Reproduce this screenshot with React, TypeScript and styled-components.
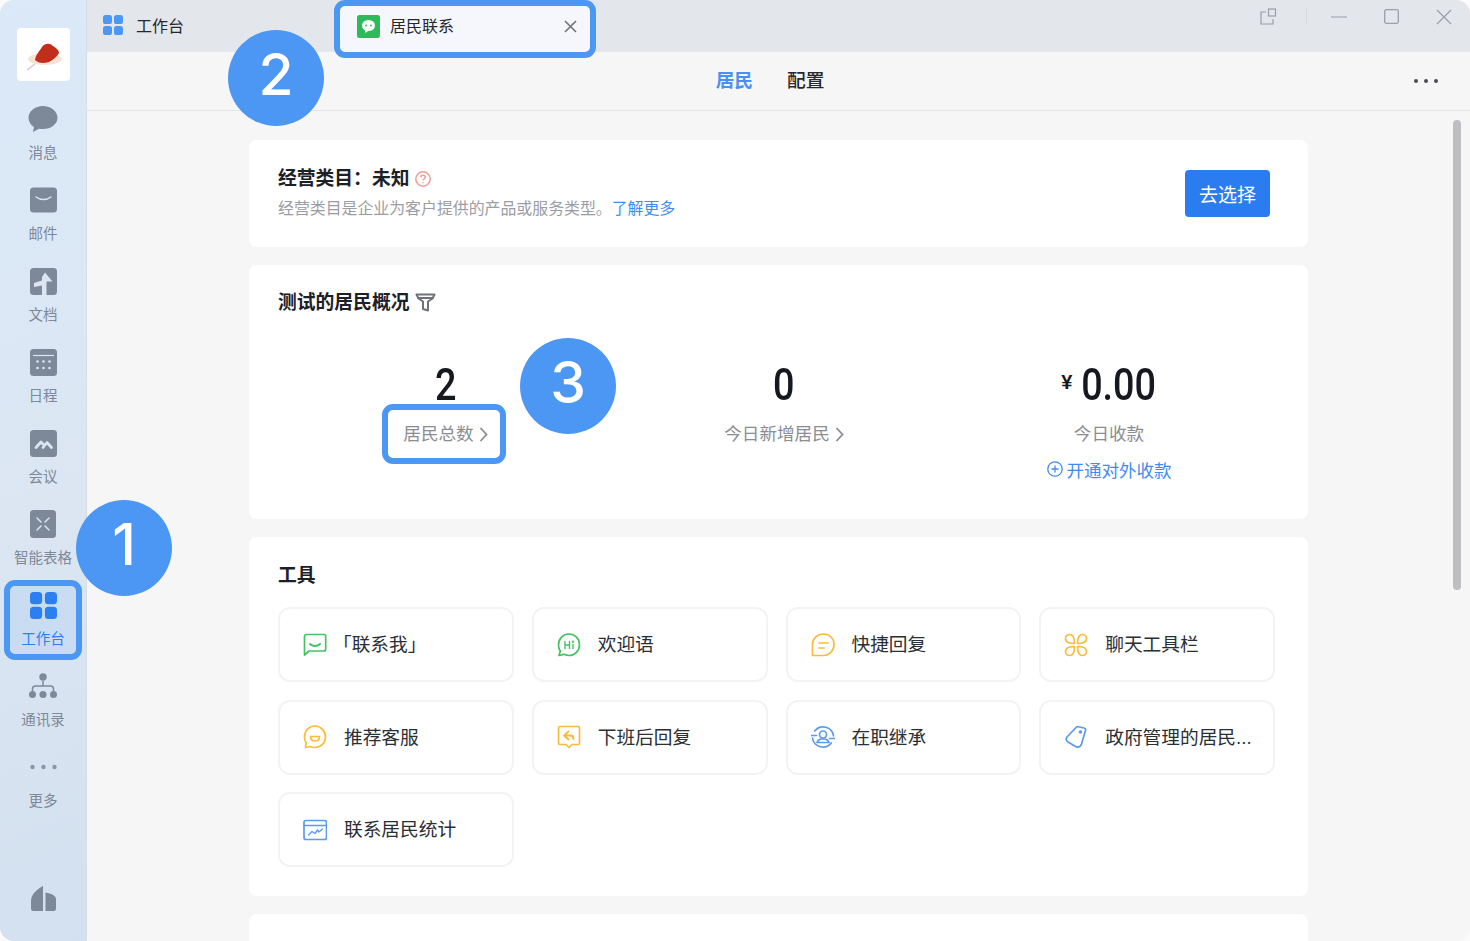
import React from 'react';
import styled, { createGlobalStyle } from 'styled-components';

const cjk = `"Liberation Sans", "Noto Sans CJK SC", sans-serif`;

const GlobalStyle = createGlobalStyle`
  html, body {
    margin: 0;
    padding: 0;
    background: #fbfbfb;
  }
  * {
    box-sizing: border-box;
  }
`;

const Window = styled.div`
  width: 1470px;
  height: 941px;
  display: flex;
  overflow: hidden;
  position: relative;
  border-radius: 14px;
  font-family: ${cjk};
  background: #f6f6f6;
`;

const SideBar = styled.div`
  width: 87px;
  flex-shrink: 0;
  display: flex;
  flex-direction: column;
  align-items: center;
  padding-top: 28px;
  background: linear-gradient(160deg, #dbe9f8 0%, #dbe6f2 55%, #d3e0ef 100%);
  border-right: 1px solid #d5dde6;
`;

const Logo = styled.div`
  width: 53px;
  height: 53px;
  border-radius: 4px;
  background: #fff;
  display: flex;
  align-items: center;
  justify-content: center;
  margin-bottom: 19px;
`;

const NavItem = styled.div<{ $active?: boolean }>`
  position: relative;
  width: 66px;
  height: 68px;
  margin-bottom: 13px;
  display: flex;
  flex-direction: column;
  align-items: center;
  justify-content: flex-start;
  padding-top: 4px;
  border-radius: 5px;
  background: ${(p) => (p.$active ? '#c9dcf2' : 'transparent')};
  color: ${(p) => (p.$active ? '#2b7ff0' : '#7d8899')};
`;

const NavIcon = styled.div`
  height: 30px;
  display: flex;
  align-items: center;
  justify-content: center;
`;

const NavLabel = styled.div`
  font-size: 14.5px;
  line-height: 18px;
  margin-top: 10px;
  white-space: nowrap;
`;

const SideFooter = styled.div`
  margin-top: auto;
  margin-bottom: 30px;
  display: flex;
`;

const Main = styled.div`
  flex: 1;
  min-width: 0;
  display: flex;
  flex-direction: column;
  position: relative;
`;

const TabBar = styled.div`
  height: 52px;
  flex-shrink: 0;
  display: flex;
  align-items: flex-start;
  position: relative;
  z-index: 2;
  background: #e3e6ea;
`;

const HomeTab = styled.div`
  width: 253px;
  height: 50px;
  padding-left: 16px;
  display: flex;
  align-items: center;
  gap: 13px;
  font-size: 16px;
  color: #23272e;
`;

const ActiveTab = styled.div`
  position: relative;
  width: 250px;
  height: 46px;
  margin-top: 6px;
  padding: 0 13px 6px 17px;
  display: flex;
  align-items: center;
  gap: 10px;
  background: #f5f7fc;
  border-radius: 4px;
  font-size: 16px;
  color: #23272e;
`;

const TabTitle = styled.span`
  margin-bottom: 2px;
`;

const CloseWrap = styled.span`
  margin-left: auto;
  display: flex;
`;

const WindowControls = styled.div`
  margin-left: auto;
  height: 33px;
  display: flex;
  align-items: center;
  gap: 37px;
  padding-right: 18px;
  color: #9a9ea5;
`;

const ControlGroup = styled.div`
  display: flex;
  align-items: center;
  margin-right: -13px;
`;

const ControlDivider = styled.span`
  width: 1px;
  height: 17px;
  background: #d8dadd;
  margin-left: 29px;
`;

const SubNav = styled.div`
  height: 59px;
  flex-shrink: 0;
  display: flex;
  align-items: center;
  justify-content: center;
  gap: 34px;
  position: relative;
  padding: 0 17px 5px 0;
  border-bottom: 1px solid #e4e5e7;
  background: #f6f6f6;
`;

const SubNavItem = styled.div<{ $active?: boolean }>`
  font-size: 18.7px;
  font-weight: ${(p) => (p.$active ? 700 : 500)};
  color: ${(p) => (p.$active ? '#4a90f0' : '#262a30')};
`;

const MoreDots = styled.div`
  position: absolute;
  right: 32px;
  top: 27px;
  display: flex;
  gap: 6px;
`;

const Dot = styled.span`
  width: 4px;
  height: 4px;
  border-radius: 50%;
  background: #4a4e55;
`;

const Content = styled.div`
  flex: 1;
  min-height: 0;
  overflow: hidden;
  padding: 29px 162px 0;
  display: flex;
  flex-direction: column;
  gap: 18px;
`;

const ScrollThumb = styled.div`
  position: absolute;
  right: 9px;
  top: 120px;
  width: 8px;
  height: 470px;
  border-radius: 4px;
  background: #bcbec2;
`;

const Card = styled.div`
  flex-shrink: 0;
  background: #fff;
  border-radius: 8px;
`;

const CategoryCard = styled(Card)`
  height: 107px;
  padding: 0 38px 0 29px;
  display: flex;
  align-items: center;
  justify-content: space-between;
`;

const CategoryText = styled.div`
  display: flex;
  flex-direction: column;
  gap: 7px;
`;

const TitleRow = styled.div`
  display: flex;
  align-items: center;
  gap: 6px;
  height: 23px;
`;

const Title = styled.div`
  font-size: 18.8px;
  line-height: 23px;
  font-weight: 700;
  color: #1c2027;
  white-space: nowrap;
`;

const SubText = styled.div`
  font-size: 15.9px;
  line-height: 23px;
  color: #9a9da3;
  white-space: nowrap;
`;

const TextLink = styled.span`
  color: #3f8bf2;
`;

const PrimaryButton = styled.div`
  width: 85px;
  height: 47px;
  border-radius: 4px;
  background: #2b7cf0;
  color: #fff;
  font-size: 19px;
  display: flex;
  align-items: center;
  justify-content: center;
`;

const StatsCard = styled(Card)`
  height: 254px;
  padding: 26px 29px 0;
`;

const StatsGrid = styled.div`
  display: grid;
  grid-template-columns: 335px 342px 308px;
  margin-top: 48px;
`;

const Stat = styled.div`
  display: flex;
  flex-direction: column;
  align-items: center;
`;

const StatValue = styled.div`
  height: 46px;
  display: flex;
  align-items: center;
  font-family: "Roboto", sans-serif;
  font-weight: 500;
  font-size: 45px;
  line-height: 46px;
  color: #15191f;
`;

const Digits = styled.span`
  display: inline-block;
  transform: scaleX(0.84);
`;

const Amount = styled(Digits)`
  margin: 0 -7px;
`;

const Yen = styled.span`
  font-family: ${cjk};
  font-size: 20px;
  font-weight: 700;
  margin-right: 9px;
  margin-top: -6px;
`;

const StatLabel = styled.div`
  position: relative;
  margin-top: 14px;
  display: flex;
  align-items: center;
  gap: 5px;
  height: 24px;
  font-size: 17.6px;
  line-height: 24px;
  color: #8a8d93;
  white-space: nowrap;
`;

const OpenLink = styled.div`
  margin-top: 11px;
  display: flex;
  align-items: center;
  gap: 4px;
  height: 24px;
  font-size: 17.5px;
  color: #3f8bf2;
  white-space: nowrap;
`;

const ToolsCard = styled(Card)`
  height: 359px;
  padding: 27px 0 0 29px;
`;

const BottomCard = styled(Card)`
  height: 60px;
`;

const ToolGrid = styled.div`
  width: 997px;
  margin-top: 20px;
  display: grid;
  grid-template-columns: repeat(4, 1fr);
  grid-auto-rows: 75px;
  gap: 17.5px 18px;
`;

const Tool = styled.div`
  border: 2px solid #f2f3f5;
  border-radius: 12px;
  padding-left: 23px;
  display: flex;
  align-items: center;
  gap: 17px;
  font-size: 18.7px;
  color: #2a2e35;
  white-space: nowrap;
  overflow: hidden;
`;

const ToolName = styled.span<{ $tuck?: boolean }>`
  margin-bottom: 4px;
  margin-left: ${(p) => (p.$tuck ? -11 : 0)}px;
`;

const Ring = styled.span<{ $x: number; $y: number; $right?: number }>`
  position: absolute;
  left: -${(p) => p.$x}px;
  right: -${(p) => p.$right ?? p.$x}px;
  top: -${(p) => p.$y}px;
  bottom: -${(p) => p.$y}px;
  border: 6px solid #4c97f4;
  border-radius: 11px;
  pointer-events: none;
`;

const Callout = styled.div<{ $cx: number; $cy: number }>`
  position: absolute;
  z-index: 3;
  left: ${(p) => p.$cx - 48}px;
  top: ${(p) => p.$cy - 48}px;
  width: 96px;
  height: 96px;
  border-radius: 50%;
  background: #4c97f4;
  color: #fff;
  font-family: "Inter", "Liberation Sans", sans-serif;
  font-size: 57px;
  font-weight: 500;
  line-height: 90px;
  text-align: center;
`;

const GridFour = ({ size, color }: { size: number; color: string }) => (
  <svg width={size} height={size} viewBox="0 0 20 20" fill={color}>
    <rect x="0" y="0" width="9" height="9" rx="2.6" />
    <rect x="11" y="0" width="9" height="9" rx="2.6" />
    <rect x="0" y="11" width="9" height="9" rx="2.6" />
    <rect x="11" y="11" width="9" height="9" rx="2.6" />
  </svg>
);

const navItems: { key: string; icon: React.ReactNode; active?: boolean }[] = [
  {
    key: '消息',
    icon: (
      <svg width="30" height="28" viewBox="0 0 30 28" fill="currentColor">
        <path d="M15 1C7 1 .5 6.2.5 12.8c0 3.8 2.2 7.1 5.4 9.3L5 27l6-3.3c1.3.3 2.6.4 4 .4 8 0 14.5-5 14.5-11.3S23 1 15 1z" />
      </svg>
    ),
  },
  {
    key: '邮件',
    icon: (
      <svg width="27" height="26" viewBox="0 0 27 26">
        <rect width="27" height="25" y=".5" rx="3.5" fill="currentColor" />
        <path d="M6 10c4.500 3.400 10.500 3.400 15 0" fill="none" stroke="#d8e3ef" strokeWidth="1.5" strokeLinecap="round" />
      </svg>
    ),
  },
  {
    key: '文档',
    icon: (
      <svg width="27" height="27" viewBox="0 0 27 27">
        <rect width="27" height="27" rx="3.5" fill="currentColor" />
        <path d="M15 4.500 22.500 13.500H16.500V27H12V17.500L4 19v-4l8-2.500V9z" fill="#dbe6f2" />
      </svg>
    ),
  },
  {
    key: '日程',
    icon: (
      <svg width="27" height="27" viewBox="0 0 27 27">
        <rect width="27" height="27" rx="3.5" fill="currentColor" />
        <path d="M3 6.500h21" stroke="#dbe6f2" strokeWidth="1.2" />
        {[7.5, 13.5, 19.5].map((x) =>
          [12.5, 19].map((y) => <circle key={`${x}-${y}`} cx={x} cy={y} r="1.3" fill="#dbe6f2" />),
        )}
      </svg>
    ),
  },
  {
    key: '会议',
    icon: (
      <svg width="27" height="27" viewBox="0 0 27 27">
        <rect width="27" height="27" rx="3.5" fill="currentColor" />
        <path d="M6 17.500 11 12l2.500 2.500M13 17.500 17 12.500l4.500 5" fill="none" stroke="#dbe6f2" strokeWidth="2.8" strokeLinecap="round" strokeLinejoin="round" />
      </svg>
    ),
  },
  {
    key: '智能表格',
    icon: (
      <svg width="26" height="28" viewBox="0 0 26 28">
        <rect width="26" height="28" rx="3.5" fill="currentColor" />
        <path d="M7 8l4 4M19 8l-4 4M7 20l4-4M19 20l-4-4" stroke="#dbe6f2" strokeWidth="1.5" strokeLinecap="round" />
      </svg>
    ),
  },
  { key: '工作台', icon: <GridFour size={27} color="#2b7ff0" />, active: true },
  {
    key: '通讯录',
    icon: (
      <svg width="28" height="26" viewBox="0 0 28 26" fill="currentColor">
        <circle cx="14" cy="4" r="3.7" />
        <circle cx="3.5" cy="21.5" r="3.5" />
        <circle cx="14" cy="21.5" r="3.5" />
        <circle cx="24.5" cy="21.5" r="3.5" />
        <path d="M14 8v5M3.500 18v-2c0-1.600 1.200-3 3-3h15c1.800 0 3 1.400 3 3v2" fill="none" stroke="currentColor" strokeWidth="1.5" />
      </svg>
    ),
  },
  {
    key: '更多',
    icon: (
      <svg width="27" height="6" viewBox="0 0 27 6" fill="currentColor" opacity=".85">
        <circle cx="2.5" cy="3" r="2.2" />
        <circle cx="13.5" cy="3" r="2.2" />
        <circle cx="24.5" cy="3" r="2.2" />
      </svg>
    ),
  },
];

type ToolIconProps = { color: string; children: React.ReactNode };

const ToolIcon: React.FC<ToolIconProps> = ({ color, children }) => (
  <svg width="24" height="24" viewBox="0 0 24 24" fill="none" stroke={color} strokeWidth="1.7" strokeLinecap="round" strokeLinejoin="round" style={{ flexShrink: 0 }}>
    {children}
  </svg>
);

const green = '#43c463';
const amber = '#f8bd3c';
const blue = '#5a9af2';

const tools: { key: string; tuck?: boolean; icon: React.ReactNode }[] = [
  {
    key: '「联系我」',
    tuck: true,
    icon: (
      <ToolIcon color={green}>
        <path d="M1.500 3.500a2 2 0 0 1 2-2h18a1.500 1.500 0 0 1 1.200 1.500v13a2 2 0 0 1-2 2H6l-4.500 4z" />
        <path d="M7 11c2.800 2.600 7.200 2.600 10 0" strokeWidth="2" />
      </ToolIcon>
    ),
  },
  {
    key: '欢迎语',
    icon: (
      <ToolIcon color={green}>
        <path d="M12 1C6 1 1.500 5.800 1.500 12c0 2.500.7 4.500 1.800 6L2 22.500l5-1.200c1.500.8 3.200 1.200 5 1.200 6 0 10.500-4.700 10.500-10.700S18 1 12 1z" />
        <path d="M8 8.500v7M12.500 8.500v7M8 12h4.500M16 11.500v4" strokeWidth="1.4" />
        <circle cx="16" cy="8.700" r=".4" />
      </ToolIcon>
    ),
  },
  {
    key: '快捷回复',
    icon: (
      <ToolIcon color={amber}>
        <path d="M12.500 1C6.500 1 1.500 5.500 1.500 11v11.500H12.500c6 0 10.500-5 10.500-11S18.500 1 12.500 1z" />
        <path d="M8 10h9M8 15h5" />
      </ToolIcon>
    ),
  },
  {
    key: '聊天工具栏',
    icon: (
      <ToolIcon color={amber}>
        <path d="M10.500 10.500C6 10.500 1.500 9.500 1.500 5.500a4 4 0 0 1 4-4c4 0 5 4.500 5 9z" />
        <path d="M13.500 10.500c4.500 0 9-1 9-5a4 4 0 0 0-4-4c-4 0-5 4.500-5 9z" />
        <path d="M10.500 13.500c-4.500 0-9 1-9 5a4 4 0 0 0 4 4c4 0 5-4.500 5-9z" />
        <path d="M13.500 13.500c4.500 0 9 1 9 5a4 4 0 0 1-4 4c-4 0-5-4.500-5-9z" />
      </ToolIcon>
    ),
  },
  {
    key: '推荐客服',
    icon: (
      <ToolIcon color={amber}>
        <path d="M12 1C6 1 1.500 5.800 1.500 12c0 2.300.6 4.300 1.600 5.900L2.500 22.500l4.800-1c1.400.7 3 1 4.700 1 6 0 10.500-4.700 10.500-10.500S18 1 12 1z" />
        <path d="M7.500 11.500h9c0 3-2 4.500-4.500 4.500s-4.500-1.500-4.500-4.500z" />
      </ToolIcon>
    ),
  },
  {
    key: '下班后回复',
    icon: (
      <ToolIcon color={amber}>
        <path d="M3 1.500h18a1.500 1.500 0 0 1 1.500 1.500v15a1.500 1.500 0 0 1-1.500 1.500h-6L12 22.500l-3-3H3A1.500 1.500 0 0 1 1.500 18V3A1.500 1.500 0 0 1 3 1.500z" />
        <path d="M11.500 6.500 7 10.500l4.500 4M7.500 10.500h6c2 0 3 1.200 3 3.500" strokeWidth="1.9" />
      </ToolIcon>
    ),
  },
  {
    key: '在职继承',
    icon: (
      <ToolIcon color={blue}>
        <path d="M22.500 11A10.500 10.500 0 0 0 3.800 6M1.500 13a10.500 10.500 0 0 0 18.700 5" />
        <path d="M.5 10.500h5M18.500 13.500h5" />
        <circle cx="12" cy="9.500" r="3.500" />
        <path d="M6 17.500c.8-2.200 2.500-3.200 4-3.500h4c1.500.3 3.200 1.300 4 3.500z" />
      </ToolIcon>
    ),
  },
  {
    key: '政府管理的居民...',
    icon: (
      <ToolIcon color={blue}>
        <path d="M13 1.500 20 3Q22 3.500 21.500 5.500L17.500 19Q16 23 12.500 22L4 17Q1 15 3 12z" />
        <circle cx="16.500" cy="7" r=".9" />
      </ToolIcon>
    ),
  },
  {
    key: '联系居民统计',
    icon: (
      <ToolIcon color={blue}>
        <rect x="1" y="2.500" width="22.500" height="19" rx="2" />
        <path d="M1 7.500h22.500" />
        <path d="M5.500 17 9 13.500l3 2 2.500-3.500 1.500 2 3.500-3" strokeWidth="1.3" />
      </ToolIcon>
    ),
  },
];

const Chevron = () => (
  <svg width="9" height="15" viewBox="0 0 9 15" fill="none" stroke="#8a8d93" strokeWidth="1.8">
    <path d="M1.500 1 7.500 7.500l-6 6.500" />
  </svg>
);

const App: React.FC = () => {
  return (
    <>
      <GlobalStyle />
      <Window>
        <SideBar>
          <Logo>
            <svg width="40" height="36" viewBox="0 0 40 36">
              <defs>
                <filter id="soft" x="-20%" y="-20%" width="140%" height="140%">
                  <feGaussianBlur stdDeviation="0.7" />
                </filter>
              </defs>
              <g filter="url(#soft)">
                <ellipse cx="22" cy="22" rx="17" ry="6" fill="#f6e3d6" />
                <path d="M12 23C13 17 16 15 19 10 22 6 27 6 30 9 33 11 36 13 36 16 34 20 30 23 26 25 20 27 15 26 12 23z" fill="#c22f1c" />
                <path d="M4 33l8-6" stroke="#e8cfdc" strokeWidth="1.8" />
              </g>
            </svg>
          </Logo>
          {navItems.map((item) => (
            <NavItem key={item.key} $active={item.active}>
              <NavIcon>{item.icon}</NavIcon>
              <NavLabel>{item.key}</NavLabel>
              {item.active && <Ring $x={6} $y={6} />}
            </NavItem>
          ))}
          <SideFooter>
            <svg width="25" height="25" viewBox="0 0 25 25" fill="#7d8899">
              <path d="M12 0C6 3.500 0 8 0 15v7.500A2.500 2.500 0 0 0 2.500 25H12z" />
              <path d="M14.500 6.500C20 7.500 25 9.500 25 13v9.500a2.500 2.500 0 0 1-2.500 2.500h-8z" />
            </svg>
          </SideFooter>
        </SideBar>
        <Main>
          <TabBar>
            <HomeTab>
              <GridFour size={20} color="#4c97f4" />
              工作台
            </HomeTab>
            <ActiveTab>
              <svg width="23" height="23" viewBox="0 0 23 23" style={{ flexShrink: 0 }}>
                <rect width="23" height="23" rx="2.5" fill="#2dbb5a" />
                <ellipse cx="11.500" cy="10.500" rx="6.500" ry="5.500" fill="#fff" />
                <path d="M8 14.500 8.300 18l3.500-2.500z" fill="#fff" />
                <circle cx="9" cy="10.500" r=".9" fill="#2dbb5a" />
                <circle cx="14" cy="10.500" r=".9" fill="#2dbb5a" />
              </svg>
              <TabTitle>居民联系</TabTitle>
              <CloseWrap>
                <svg width="13" height="13" viewBox="0 0 13 13" stroke="#6f7276" strokeWidth="1.6">
                  <path d="M1 1l11 11M12 1 1 12" />
                </svg>
              </CloseWrap>
              <Ring $x={6} $y={6} />
            </ActiveTab>
            <WindowControls>
              <ControlGroup>
                <svg width="17" height="17" viewBox="0 0 17 17" fill="none" stroke="currentColor" strokeWidth="1.2">
                  <path d="M6 4H1v12h12v-5" />
                  <rect x="8.500" y="1" width="7" height="7" />
                </svg>
                <ControlDivider />
              </ControlGroup>
              <svg width="16" height="2" viewBox="0 0 16 2" stroke="currentColor" strokeWidth="1.2">
                <path d="M0 1h16" />
              </svg>
              <svg width="15" height="15" viewBox="0 0 15 15" fill="none" stroke="currentColor" strokeWidth="1.3">
                <rect x=".7" y=".7" width="13.600" height="13.600" rx="1.500" />
              </svg>
              <svg width="16" height="16" viewBox="0 0 16 16" stroke="currentColor" strokeWidth="1.2">
                <path d="M1 1l14 14M15 1 1 15" />
              </svg>
            </WindowControls>
          </TabBar>
          <SubNav>
            <SubNavItem $active>居民</SubNavItem>
            <SubNavItem>配置</SubNavItem>
            <MoreDots>
              <Dot />
              <Dot />
              <Dot />
            </MoreDots>
          </SubNav>
          <Content>
            <CategoryCard>
              <CategoryText>
                <TitleRow>
                  <Title>经营类目：未知</Title>
                  <svg width="16" height="16" viewBox="0 0 16 16" fill="none" stroke="#f49c92" strokeWidth="1.5">
                    <circle cx="8" cy="8" r="7.2" />
                    <path d="M5.800 6.300c0-1.300 1-2.100 2.200-2.100s2.200.8 2.200 2c0 1.500-2.200 1.700-2.200 3.400" />
                    <path d="M8 11.200v1" />
                  </svg>
                </TitleRow>
                <SubText>
                  经营类目是企业为客户提供的产品或服务类型。<TextLink>了解更多</TextLink>
                </SubText>
              </CategoryText>
              <PrimaryButton>去选择</PrimaryButton>
            </CategoryCard>
            <StatsCard>
              <TitleRow>
                <Title>测试的居民概况</Title>
                <svg width="21" height="19" viewBox="0 0 20 19" fill="none" stroke="#6f7276" strokeWidth="2" strokeLinejoin="round">
                  <path d="M1 1.500h18l-2 4-4.500 3v9l-5-1.500V8.500L3 5.500z" />
                  <path d="M2 5h16" />
                </svg>
              </TitleRow>
              <StatsGrid>
                <Stat>
                  <StatValue>
                    <Digits>2</Digits>
                  </StatValue>
                  <StatLabel>
                    居民总数
                    <Chevron />
                    <Ring $x={21} $y={18} $right={18} />
                  </StatLabel>
                </Stat>
                <Stat>
                  <StatValue>
                    <Digits>0</Digits>
                  </StatValue>
                  <StatLabel>
                    今日新增居民
                    <Chevron />
                  </StatLabel>
                </Stat>
                <Stat>
                  <StatValue>
                    <Yen>¥</Yen>
                    <Amount>0.00</Amount>
                  </StatValue>
                  <StatLabel>今日收款</StatLabel>
                  <OpenLink>
                    <svg width="16" height="16" viewBox="0 0 16 16" fill="none" stroke="#3f8bf2" strokeWidth="1.3">
                      <circle cx="8" cy="8" r="7.2" />
                      <path d="M8 4.500v7M4.500 8h7" />
                    </svg>
                    开通对外收款
                  </OpenLink>
                </Stat>
              </StatsGrid>
            </StatsCard>
            <ToolsCard>
              <Title>工具</Title>
              <ToolGrid>
                {tools.map((tool) => (
                  <Tool key={tool.key}>
                    {tool.icon}
                    <ToolName $tuck={tool.tuck}>{tool.key}</ToolName>
                  </Tool>
                ))}
              </ToolGrid>
            </ToolsCard>
            <BottomCard />
          </Content>
          <ScrollThumb />
        </Main>
        <Callout $cx={124} $cy={548}>1</Callout>
        <Callout $cx={276} $cy={78}>2</Callout>
        <Callout $cx={568} $cy={386}>3</Callout>
      </Window>
    </>
  );
};

export default App;
